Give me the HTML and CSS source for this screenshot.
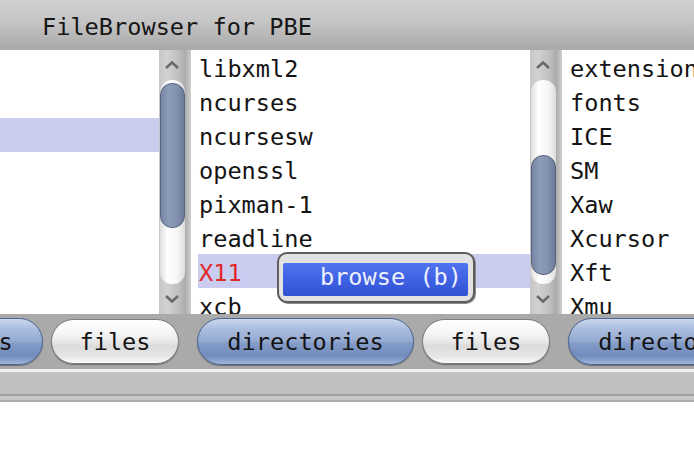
FILE: index.html
```html
<!DOCTYPE html>
<html>
<head>
<meta charset="utf-8">
<title>FileBrowser for PBE</title>
<link rel="stylesheet" href="styles.css">
</head>
<body>
<div class="window">
  <div class="titlebar">FileBrowser for PBE</div>
  <div class="panes">
    <div class="pane">
      <div class="pane-body">
        <ul class="list">
          <li></li>
          <li></li>
          <li class="selected"></li>
          <li></li>
          <li></li>
          <li></li>
          <li></li>
          <li></li>
        </ul>
        <div class="scrollbar">
          <div class="arrow"><svg width="16" height="10" viewBox="0 0 16 10"><polyline points="2,8 8,2.5 14,8" fill="none" stroke="#6a6a6a" stroke-width="2.6"/></svg></div>
          <div class="track"><div class="thumb thumb-a"></div></div>
          <div class="arrow"><svg width="16" height="10" viewBox="0 0 16 10"><polyline points="2,2 8,7.5 14,2" fill="none" stroke="#6a6a6a" stroke-width="2.6"/></svg></div>
        </div>
      </div>
      <div class="buttons">
        <button class="pill pill-blue">directories</button>
        <button class="pill pill-white">files</button>
      </div>
    </div>
    <div class="pane">
      <div class="pane-body">
        <ul class="list">
          <li>libxml2</li>
          <li>ncurses</li>
          <li>ncursesw</li>
          <li>openssl</li>
          <li>pixman-1</li>
          <li>readline</li>
          <li class="selected red">X11</li>
          <li>xcb</li>
        </ul>
        <div class="popup"><div class="popup-item">browse (b)</div></div>
        <div class="scrollbar">
          <div class="arrow"><svg width="16" height="10" viewBox="0 0 16 10"><polyline points="2,8 8,2.5 14,8" fill="none" stroke="#6a6a6a" stroke-width="2.6"/></svg></div>
          <div class="track"><div class="thumb thumb-b"></div></div>
          <div class="arrow"><svg width="16" height="10" viewBox="0 0 16 10"><polyline points="2,2 8,7.5 14,2" fill="none" stroke="#6a6a6a" stroke-width="2.6"/></svg></div>
        </div>
      </div>
      <div class="buttons">
        <button class="pill pill-blue">directories</button>
        <button class="pill pill-white">files</button>
      </div>
    </div>
    <div class="pane">
      <div class="pane-body">
        <ul class="list">
          <li>extensions</li>
          <li>fonts</li>
          <li>ICE</li>
          <li>SM</li>
          <li>Xaw</li>
          <li>Xcursor</li>
          <li>Xft</li>
          <li>Xmu</li>
        </ul>
        <div class="scrollbar">
          <div class="arrow"><svg width="16" height="10" viewBox="0 0 16 10"><polyline points="2,8 8,2.5 14,8" fill="none" stroke="#6a6a6a" stroke-width="2.6"/></svg></div>
          <div class="track"><div class="thumb thumb-a"></div></div>
          <div class="arrow"><svg width="16" height="10" viewBox="0 0 16 10"><polyline points="2,2 8,7.5 14,2" fill="none" stroke="#6a6a6a" stroke-width="2.6"/></svg></div>
        </div>
      </div>
      <div class="buttons">
        <button class="pill pill-blue">directories</button>
        <button class="pill pill-white">files</button>
      </div>
    </div>
  </div>
  <div class="statusbar"></div>
  <div class="statusbar-edge"></div>
  <div class="textarea"></div>
</div>
</body>
</html>
```

FILE: styles.css
```css
html, body {
  margin: 0;
  padding: 0;
  background: #ffffff;
}

body {
  width: 694px;
  height: 454px;
  overflow: hidden;
  font-family: "DejaVu Sans Mono", "Liberation Mono", monospace;
  font-size: 23.6px;
  color: #141414;
}

.window {
  width: 694px;
  height: 454px;
  overflow: hidden;
}

.titlebar {
  box-sizing: border-box;
  height: 50px;
  padding: 13px 0 0 42px;
  line-height: 28px;
  color: #161616;
  background: linear-gradient(to bottom, #d0d0d0 0%, #c4c4c4 45%, #a9a9a9 100%);
  white-space: nowrap;
}

.panes {
  display: flex;
  margin-left: -180px;
  width: 1113px;
}

.pane {
  width: 371px;
  flex: none;
  display: flex;
  flex-direction: column;
}

.pane-body {
  position: relative;
  display: flex;
  height: 264px;
  background: #ffffff;
}

.list {
  list-style: none;
  margin: 0;
  padding: 0 0 0 7px;
  width: 339px;
  box-sizing: border-box;
  flex: none;
  overflow: hidden;
}

.list li {
  box-sizing: border-box;
  height: 34px;
  padding: 4px 0 0 1px;
  line-height: 30px;
  white-space: nowrap;
}

.list li.selected {
  background: #cbcdf0;
}

.list li.red {
  color: #e02828;
}

.scrollbar {
  width: 32px;
  flex: none;
  display: flex;
  flex-direction: column;
  background: linear-gradient(to right, #c6c6c6 0%, #d2d2d2 25%, #c0c0c0 60%, #acacac 82%, #cfcfcf 100%);
}

.arrow {
  height: 30px;
  display: flex;
  align-items: center;
  padding-left: 5px;
}

.track {
  height: 204px;
  width: 25px;
  margin-left: 1px;
  border-radius: 12px;
  background: linear-gradient(to right, #dedede 0%, #ffffff 30%, #f6f6f6 70%, #dcdcdc 100%);
  display: flex;
  flex-direction: column;
}

.thumb {
  box-sizing: border-box;
  width: 25px;
  border: 1.5px solid #56647e;
  border-radius: 12px;
  background: linear-gradient(to right, #7686a4 0%, #8d9cb8 35%, #8494b0 65%, #6a7a98 100%);
}

.thumb-a {
  margin-top: 3px;
  height: 145px;
}

.thumb-b {
  margin-top: 75px;
  height: 120px;
}

.popup {
  position: absolute;
  left: 86px;
  top: 202px;
  box-sizing: border-box;
  width: 198px;
  height: 51px;
  padding: 9px 5px 5px 4px;
  border: 2px solid #5c5c5c;
  border-radius: 10px;
  background: #e2e2e2;
  box-shadow: 1px 1px 0 #8a8a8a;
}

.popup-item {
  height: 33px;
  box-sizing: border-box;
  padding: 0 6px 4px 0;
  line-height: 29px;
  text-align: right;
  color: #eef0ff;
  background: linear-gradient(to bottom, #5074f0 0%, #3e62e2 50%, #2f52d4 100%);
  border-radius: 2px;
  white-space: nowrap;
}

.buttons {
  box-sizing: border-box;
  height: 55px;
  padding: 4px 0 0 6px;
  display: flex;
  gap: 8px;
  background: #aaaaaa;
}

.pill {
  box-sizing: border-box;
  height: 47px;
  padding: 0;
  font-family: "DejaVu Sans Mono", "Liberation Mono", monospace;
  font-size: 23.6px;
  line-height: 44px;
  color: #141414;
  border-radius: 24px;
  text-align: center;
  white-space: nowrap;
}

.pill-blue {
  width: 217px;
  border: 1.5px solid #4a6496;
  background: linear-gradient(to bottom, #cdd8ec 0%, #adbfe0 20%, #96abd2 48%, #839bc6 55%, #728bbe 82%, #a0b5da 100%);
  box-shadow: 0 1px 1px #6c6c6c;
}

.pill-white {
  width: 128px;
  margin-top: 1px;
  height: 45px;
  line-height: 42px;
  border: 1.5px solid #7c7c7c;
  background: linear-gradient(to bottom, #ffffff 0%, #f6f6f6 30%, #e8e8e8 50%, #dcdcdc 60%, #e6e6e6 85%, #fbfbfb 100%);
  box-shadow: 0 1px 1px #6c6c6c;
}

.statusbar {
  height: 22px;
  background: #c0c0c0;
  border-top: 3px solid #f0f0f0;
  border-bottom: 2px solid #a0a0a0;
}

.statusbar-edge {
  height: 4px;
  background: #c6c6c6;
  border-bottom: 2px solid #ababab;
}

.textarea {
  height: 52px;
  background: #ffffff;
}
```
